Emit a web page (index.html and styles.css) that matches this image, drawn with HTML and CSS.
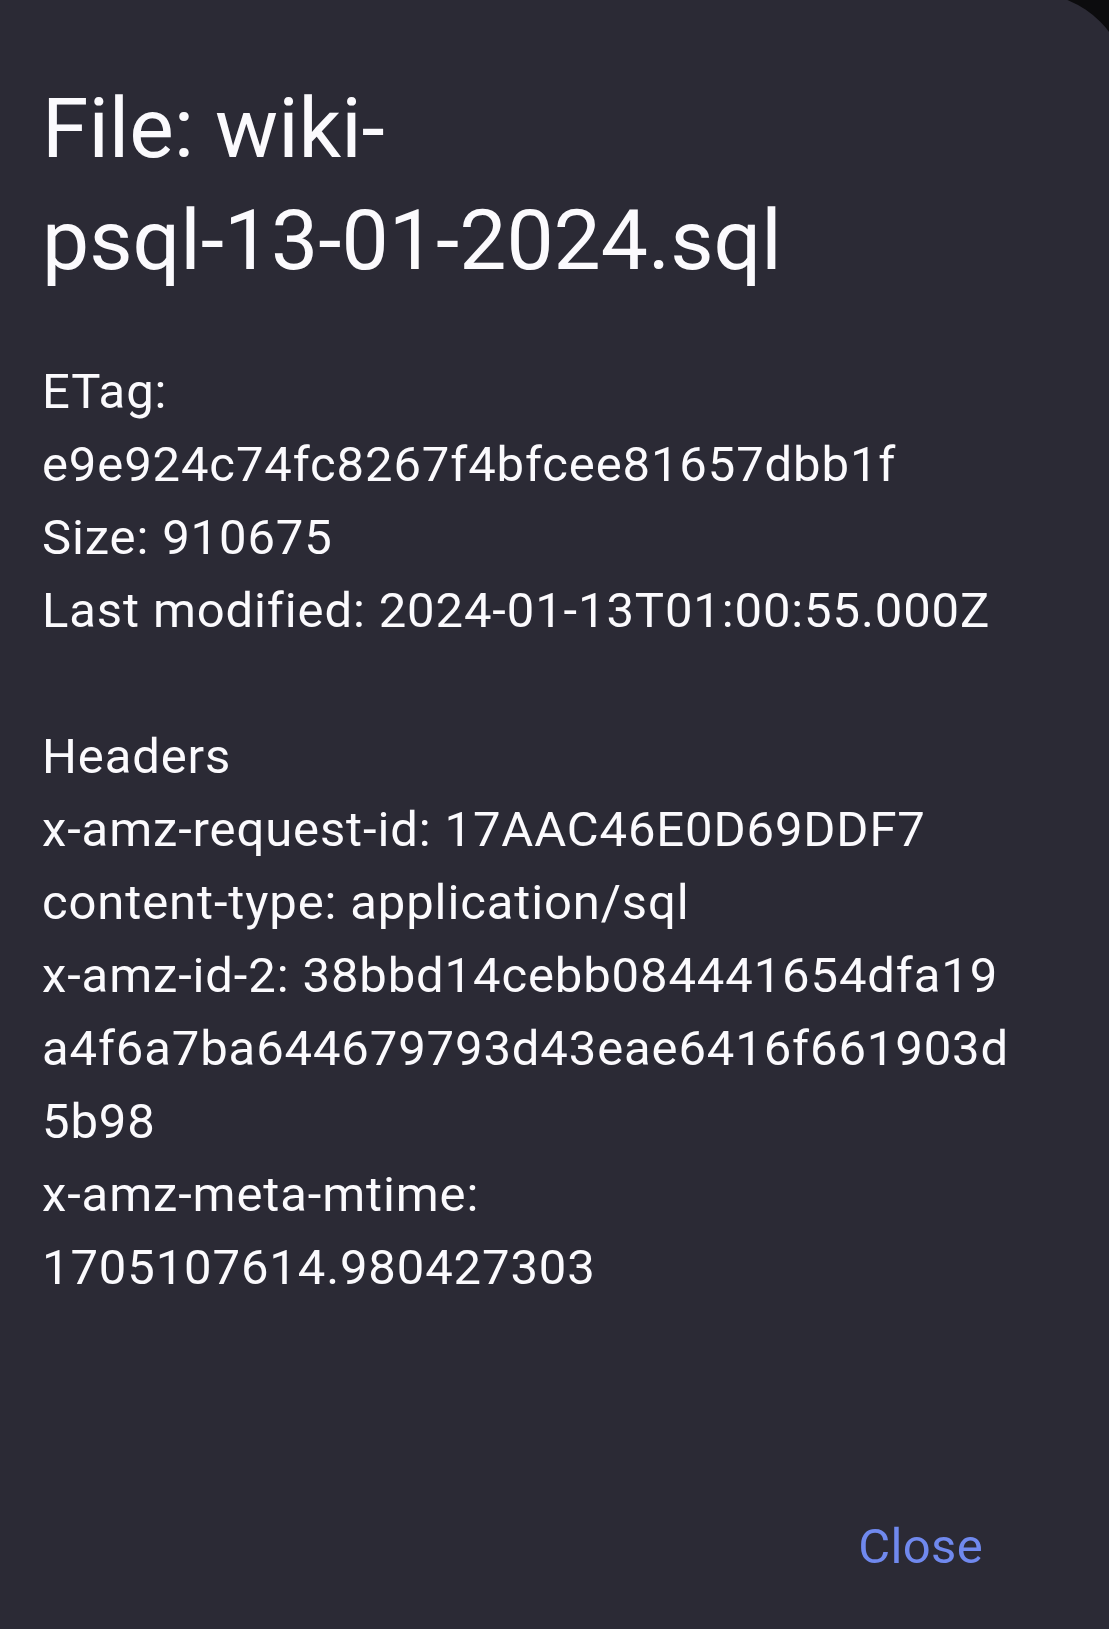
FILE: index.html
```html
<!DOCTYPE html>
<html lang="en">
<head>
    <meta charset="UTF-8">
    <meta name="viewport" content="width=device-width, initial-scale=1.0">
    <title>File details</title>
    <link rel="stylesheet" href="styles.css">
</head>
<body>
    <div class="dialog">
        <h1 class="dialog-title">File: wiki-<br>psql-13-01-2024.sql</h1>

        <div class="dialog-body">
            <p>ETag:<br>e9e924c74fc8267f4bfcee81657dbb1f</p>
            <p>Size: 910675</p>
            <p>Last modified: 2024-01-13T01:00:55.000Z</p>
            <p class="blank">&nbsp;</p>
            <p>Headers</p>
            <p>x-amz-request-id: 17AAC46E0D69DDF7</p>
            <p>content-type: application/sql</p>
            <p>x-amz-id-2: 38bbd14cebb084441654dfa19<br>a4f6a7ba644679793d43eae6416f661903d<br>5b98</p>
            <p>x-amz-meta-mtime: 1705107614.980427303</p>
        </div>

        <div class="actions">
            <button class="btn-text">Close</button>
        </div>
    </div>
</body>
</html>
```

FILE: styles.css
```css
* {
    margin: 0;
    padding: 0;
    box-sizing: border-box;
}

html, body {
    height: 100%;
}

body {
    font-family: Roboto, 'Noto Sans', sans-serif;
    background: #0c0c0e;
    overflow: hidden;
}

.dialog {
    margin: -7px -20px 0 0;
    padding: 80px 104px 0 42px;
    min-height: calc(100% + 7px);
    background: #2b2a35;
    border-top-right-radius: 98px;
    color: #fbfafd;
}

.dialog-title {
    font-size: 84px;
    font-weight: 400;
    line-height: 112px;
}

.dialog-body {
    margin-top: 58px;
    font-size: 49px;
    line-height: 73px;
    letter-spacing: 0.875px;
}

.dialog-body p:last-child {
    max-width: 800px;
}

.actions {
    display: flex;
    justify-content: flex-end;
    margin-top: 172px;
}

.btn-text {
    height: 140px;
    padding: 0 42px;
    border: none;
    background: none;
    color: #7089ee;
    font-family: inherit;
    font-size: 49px;
    font-weight: 400;
    line-height: 49px;
    letter-spacing: 0.35px;
    cursor: pointer;
}
```
